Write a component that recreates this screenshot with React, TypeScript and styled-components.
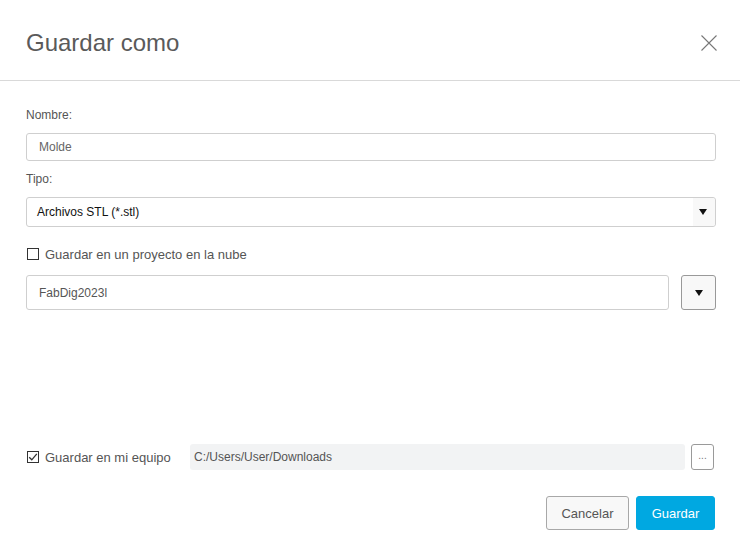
import styled, { createGlobalStyle } from "styled-components";

const GlobalStyle = createGlobalStyle`
  html, body {
    margin: 0;
    padding: 0;
    background: #ffffff;
  }
  * {
    box-sizing: border-box;
  }
`;

const Dialog = styled.div`
  width: 740px;
  height: 555px;
  display: flex;
  flex-direction: column;
  font-family: "Liberation Sans", Arial, sans-serif;
  color: #555;
  background: #fff;
`;

const Header = styled.div`
  height: 81px;
  display: flex;
  align-items: center;
  justify-content: space-between;
  padding: 5px 22px 0 26px;
  border-bottom: 1px solid #d9d9d9;
`;

const Title = styled.h1`
  margin: 0;
  font-size: 24px;
  font-weight: normal;
  color: #5a5a5a;
  line-height: 28px;
`;

const CloseButton = styled.button`
  width: 18px;
  height: 18px;
  padding: 0;
  border: none;
  background: none;
  cursor: pointer;
  display: flex;
`;

const Body = styled.div`
  flex: 1;
  display: flex;
  flex-direction: column;
  padding: 26px 24px 25px 26px;
`;

const Label = styled.div<{ $top?: number }>`
  font-size: 12px;
  line-height: 16px;
  color: #555;
  margin-top: ${(p) => p.$top ?? 0}px;
`;

const TextField = styled.div<{ $height: number; $top: number; $color?: string; $grow?: boolean }>`
  height: ${(p) => p.$height}px;
  margin-top: ${(p) => p.$top}px;
  border: 1px solid #cfcfcf;
  border-radius: 3px;
  display: flex;
  align-items: center;
  padding-left: 12px;
  font-size: 12px;
  color: ${(p) => p.$color ?? "#666"};
  flex: ${(p) => (p.$grow ? 1 : "none")};
`;

const Select = styled.div`
  height: 30px;
  margin-top: 10px;
  border: 1px solid #cfcfcf;
  border-radius: 3px;
  display: flex;
  align-items: center;
  font-size: 12px;
  color: #111;
`;

const SelectValue = styled.span`
  flex: 1;
  padding-left: 10px;
`;

const SelectArrow = styled.span`
  width: 22px;
  align-self: stretch;
  background: #f8f8f8;
  border-radius: 0 3px 3px 0;
  display: flex;
  align-items: center;
  justify-content: center;
  padding-right: 2px;
`;

const Caret = styled.span`
  width: 0;
  height: 0;
  border-left: 4.5px solid transparent;
  border-right: 4.5px solid transparent;
  border-top: 6px solid #111;
`;

const CheckRow = styled.label<{ $top: number }>`
  display: flex;
  align-items: center;
  gap: 6px;
  margin-top: ${(p) => p.$top}px;
  height: 16px;
  font-size: 13px;
  color: #555;
  padding-left: 1px;
`;

const Box = styled.span`
  width: 12px;
  height: 12px;
  border: 1px solid #333;
  display: flex;
  align-items: center;
  justify-content: center;
  background: #fff;
`;

const ProjectRow = styled.div`
  display: flex;
  gap: 12px;
  margin-top: 13px;
`;

const IconButton = styled.button`
  width: 35px;
  height: 35px;
  border: 1px solid #999;
  border-radius: 3px;
  background: #f8f8f8;
  display: flex;
  align-items: center;
  justify-content: center;
  padding: 0;
`;

const LocalRow = styled.div`
  margin-top: auto;
  display: flex;
  align-items: center;
  height: 26px;
  padding-right: 2px;
`;

const LocalCheck = styled(CheckRow)`
  width: 164px;
  margin-top: 0;
`;

const PathField = styled.div`
  flex: 1;
  height: 26px;
  background: #f2f3f4;
  border-radius: 3px;
  display: flex;
  align-items: center;
  padding-left: 4px;
  font-size: 12px;
  color: #555;
`;

const BrowseButton = styled.button`
  width: 23px;
  height: 26px;
  margin-left: 6px;
  border: 1px solid #9a9a9a;
  border-radius: 3px;
  background: #fff;
  font-family: inherit;
  font-size: 10px;
  color: #777;
  padding: 0 0 4px;
`;

const Footer = styled.div`
  display: flex;
  justify-content: flex-end;
  gap: 7px;
  margin-top: 26px;
  padding-right: 1px;
`;

const Button = styled.button<{ $primary?: boolean }>`
  height: 34px;
  padding: 0;
  width: ${(p) => (p.$primary ? 79 : 83)}px;
  border-radius: 3px;
  border: 1px solid ${(p) => (p.$primary ? "#00a8e1" : "#a8a8a8")};
  background: ${(p) => (p.$primary ? "#00a8e1" : "#f8f8f8")};
  color: ${(p) => (p.$primary ? "#fff" : "#555")};
  font-family: inherit;
  font-size: 13px;
`;

const Checkbox = ({ checked }: { checked?: boolean }) => (
  <Box>
    {checked && (
      <svg width="10" height="10" viewBox="0 0 10 10">
        <path d="M1.2 5.2 L3.8 7.8 L8.8 1.8" fill="none" stroke="#333" strokeWidth="1.3" />
      </svg>
    )}
  </Box>
);

const App: React.FC = () => {
  return (
    <>
      <GlobalStyle />
      <Dialog>
        <Header>
          <Title>Guardar como</Title>
          <CloseButton aria-label="Cerrar">
            <svg width="18" height="18" viewBox="0 0 18 18">
              <path d="M1.5 1.5 L16.5 16.5 M16.5 1.5 L1.5 16.5" stroke="#777" strokeWidth="1.1" fill="none" />
            </svg>
          </CloseButton>
        </Header>
        <Body>
          <Label>Nombre:</Label>
          <TextField $height={28} $top={10}>
            Molde
          </TextField>
          <Label $top={10}>Tipo:</Label>
          <Select>
            <SelectValue>Archivos STL (*.stl)</SelectValue>
            <SelectArrow>
              <Caret />
            </SelectArrow>
          </Select>
          <CheckRow $top={19}>
            <Checkbox />
            Guardar en un proyecto en la nube
          </CheckRow>
          <ProjectRow>
            <TextField $height={35} $top={0} $color="#555" $grow>
              FabDig2023l
            </TextField>
            <IconButton aria-label="Proyectos">
              <Caret />
            </IconButton>
          </ProjectRow>
          <LocalRow>
            <LocalCheck $top={0}>
              <Checkbox checked />
              Guardar en mi equipo
            </LocalCheck>
            <PathField>C:/Users/User/Downloads</PathField>
            <BrowseButton>...</BrowseButton>
          </LocalRow>
          <Footer>
            <Button>Cancelar</Button>
            <Button $primary>Guardar</Button>
          </Footer>
        </Body>
      </Dialog>
    </>
  );
};

export default App;
